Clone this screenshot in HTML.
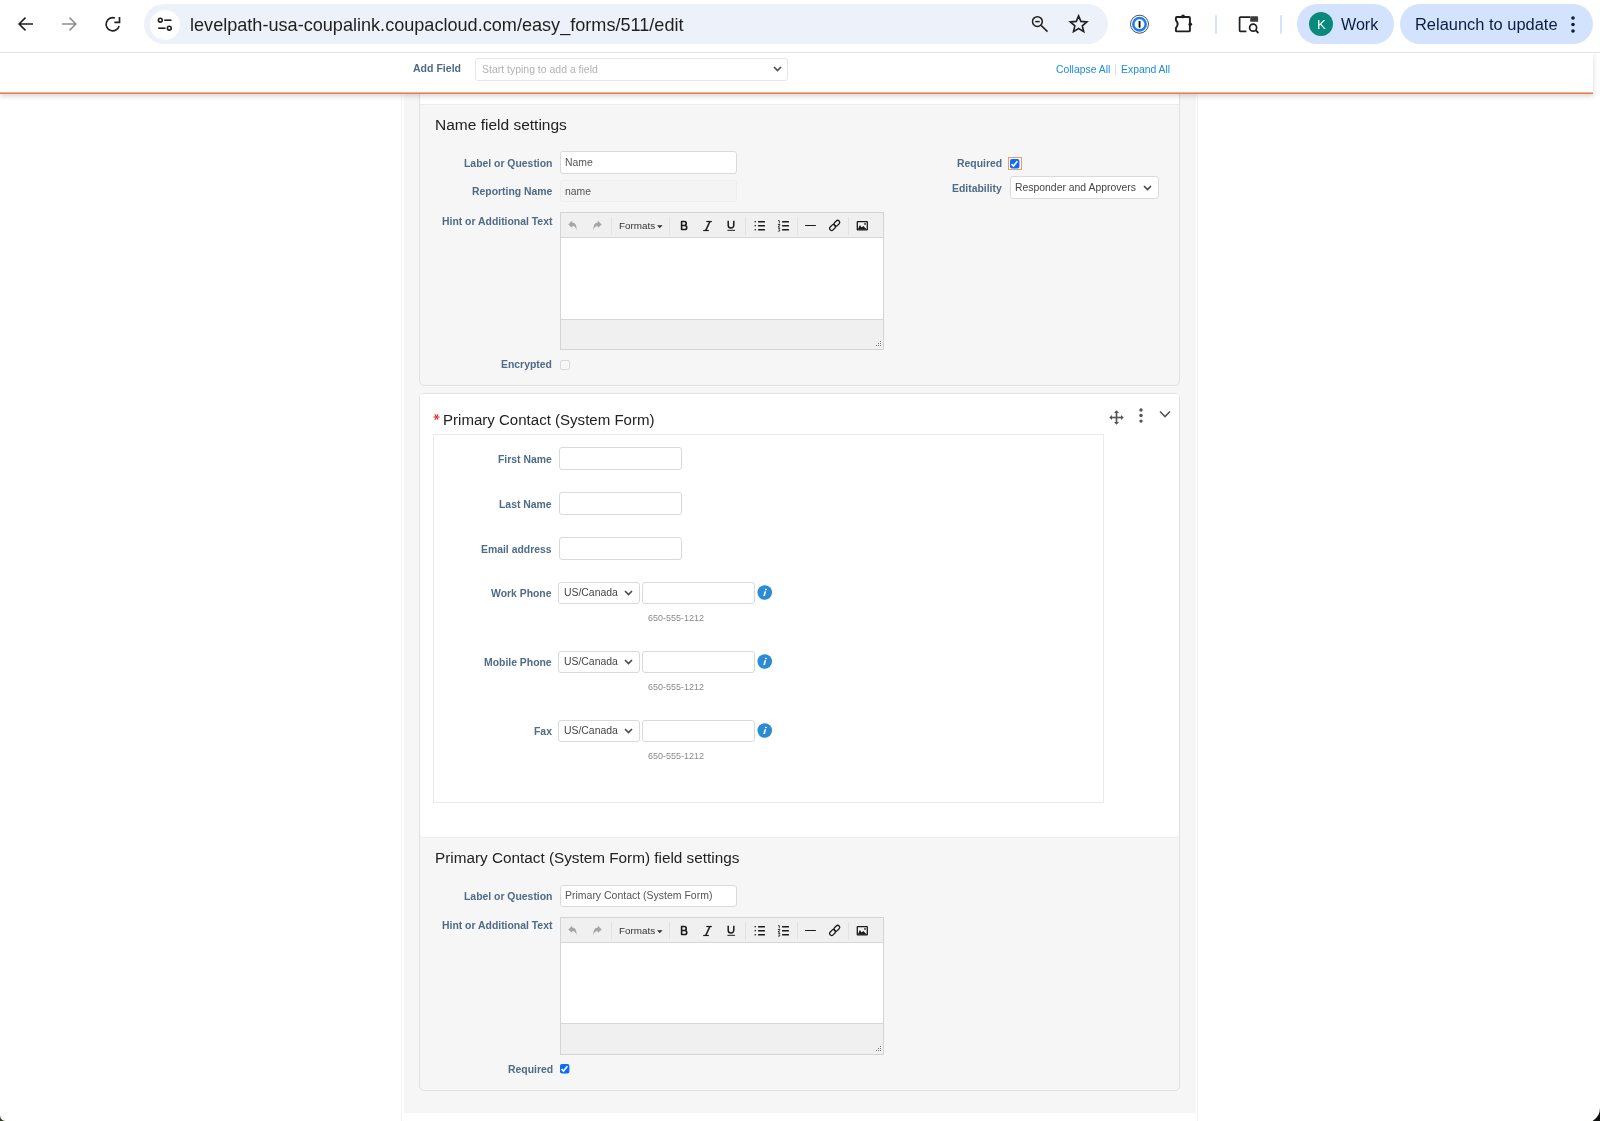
<!DOCTYPE html>
<html><head><meta charset="utf-8">
<style>
*{box-sizing:border-box;margin:0;padding:0}
html,body{width:1600px;height:1121px;overflow:hidden;background:#fff;font-family:"Liberation Sans",sans-serif;position:relative}
.a{position:absolute}
.t{line-height:1;white-space:nowrap;will-change:transform}
</style></head><body>

<div class="a" style="left:401px;top:53px;width:1px;height:1068px;background:#f2f2f2"></div>
<div class="a" style="left:1197px;top:53px;width:1px;height:1068px;background:#f2f2f2"></div>
<div class="a" style="left:404px;top:53px;width:792px;height:1060px;background:#f6f6f6"></div>
<div class="a" style="left:419px;top:40px;width:761px;height:346px;background:#f6f6f6;border:1px solid #e2e2e2;border-radius:5px"></div>
<div class="a" style="left:420px;top:41px;width:759px;height:64px;background:#fff;border-bottom:1px solid #ececec"></div>
<div class="a t" style="left:435.00px;top:116.88px;font-size:15.5px;color:#222;font-weight:normal;">Name field settings</div>
<div class="a t" style="right:1047.50px;top:159.08px;font-size:10.42px;color:#4e6b88;font-weight:bold;">Label or Question</div>
<div class="a" style="left:560px;top:151px;width:177px;height:23px;background:#fff;border:1px solid #dadada;border-radius:3px;"></div>
<div class="a t" style="left:564.80px;top:158.48px;font-size:10.42px;color:#555;font-weight:normal;">Name</div>
<div class="a t" style="right:1047.50px;top:187.48px;font-size:10.42px;color:#4e6b88;font-weight:bold;">Reporting Name</div>
<div class="a" style="left:560px;top:180px;width:177px;height:22px;background:#f4f4f4;border:1px solid #ededed;border-radius:3px"></div>
<div class="a t" style="left:564.80px;top:186.78px;font-size:10.42px;color:#555;font-weight:normal;">name</div>
<div class="a t" style="right:1047.50px;top:216.78px;font-size:10.42px;color:#4e6b88;font-weight:bold;">Hint or Additional Text</div>
<div class="a" style="left:560px;top:212px;width:324px;height:138px;border:1px solid #d4d4d4;background:#f0f0f0"></div>
<div class="a" style="left:561px;top:237px;width:322px;height:83px;background:#fff;border-top:1px solid #d6d6d6;border-bottom:1px solid #d6d6d6"></div>
<div class="a" style="left:611px;top:217px;width:1px;height:18px;background:#e2e2e2"></div>
<div class="a" style="left:669px;top:217px;width:1px;height:18px;background:#e2e2e2"></div>
<div class="a" style="left:745px;top:217px;width:1px;height:18px;background:#e2e2e2"></div>
<div class="a" style="left:797px;top:217px;width:1px;height:18px;background:#e2e2e2"></div>
<div class="a" style="left:848px;top:217px;width:1px;height:18px;background:#e2e2e2"></div>
<svg class="a" style="left:566px;top:219px" width="12" height="13" viewBox="0 0 12 13"><path d="M2.3 5.4 L6.2 1.6 V3.8 C9.3 3.8 10.8 5.6 10.5 11.5 C9.9 8.4 8.6 7.1 6.2 7.1 V9.0 Z" fill="#a6a6a6"/></svg>
<svg class="a" style="left:592.4px;top:219px" width="12" height="13" viewBox="0 0 12 13"><path d="M9.7 5.4 L5.8 1.6 V3.8 C2.7 3.8 1.2 5.6 1.5 11.5 C2.1 8.4 3.4 7.1 5.8 7.1 V9.0 Z" fill="#a6a6a6"/></svg>
<div class="a t" style="left:618.60px;top:221.42px;font-size:9.9px;color:#333;font-weight:normal;">Formats</div>
<svg class="a" style="left:657px;top:224.5px" width="6" height="4" viewBox="0 0 6 4"><path d="M0 0.3 H5.6 L2.8 3.3 Z" fill="#333"/></svg>
<svg class="a" style="left:680px;top:220px" width="9" height="12" viewBox="0 0 9 12"><path d="M1.6 1.55 H4.3 A1.95 1.95 0 0 1 4.3 5.45 H1.6 Z M1.6 5.45 H4.7 A2.05 2.05 0 0 1 4.7 9.55 H1.6 Z" fill="none" stroke="#1a1a1a" stroke-width="1.6" stroke-linejoin="round"/></svg>
<svg class="a" style="left:702px;top:220px" width="11" height="12" viewBox="0 0 11 12"><g stroke="#1a1a1a"><path d="M4.3 1.5 H9.8" stroke-width="1.2"/><path d="M1.2 10.5 H6.8" stroke-width="1.2"/><path d="M7.9 1.5 L3.7 10.5" stroke-width="1.6"/></g></svg>
<svg class="a" style="left:727px;top:220px" width="9" height="12" viewBox="0 0 9 12"><path d="M1.2 0.8 V5.3 A2.8 2.8 0 0 0 6.8 5.3 V0.8" fill="none" stroke="#1a1a1a" stroke-width="1.5"/><rect x="0.4" y="9.8" width="7.6" height="1.1" fill="#333"/></svg>
<svg class="a" style="left:754px;top:220px" width="12" height="11" viewBox="0 0 12 11"><g fill="#1a1a1a"><rect x="0.6" y="1" width="1.3" height="1.3"/><rect x="0.6" y="5" width="1.3" height="1.3"/><rect x="0.6" y="9.1" width="1.3" height="1.3"/><rect x="4" y="0.9" width="7" height="1.5" rx=".5"/><rect x="4" y="4.9" width="7" height="1.5" rx=".5"/><rect x="4" y="9" width="7" height="1.5" rx=".5"/></g></svg>
<svg class="a" style="left:777px;top:220px" width="12" height="12" viewBox="0 0 12 12"><g fill="#1a1a1a"><rect x="5" y="0.9" width="7" height="1.5" rx=".5"/><rect x="5" y="4.9" width="7" height="1.5" rx=".5"/><rect x="5" y="9" width="7" height="1.5" rx=".5"/></g><g fill="none" stroke="#1a1a1a" stroke-width="0.8"><path d="M1 0.6 H2.3 V3.4"/><path d="M0.9 4.5 H3 L1 7 H3"/><path d="M1 8.3 H3 L2 9.5 Q3.2 9.8 2.6 11.1 H0.9"/></g></svg>
<div class="a" style="left:805px;top:224.8px;width:11px;height:1.3999999999999773px;background:#1a1a1a;border-radius:1px"></div>
<svg class="a" style="left:828px;top:218px" width="14" height="14" viewBox="0 0 14 14"><g fill="none" stroke="#1a1a1a" stroke-width="1.25"><rect x="-3.3" y="-2" width="6.6" height="4" rx="2" transform="translate(8.8 5.3) rotate(-45)"/><rect x="-3.3" y="-2" width="6.6" height="4" rx="2" transform="translate(4.6 9.5) rotate(-45)"/></g></svg>
<svg class="a" style="left:856px;top:220px" width="13" height="11" viewBox="0 0 13 11"><rect x="1.3" y="1.7" width="10" height="8.2" fill="none" stroke="#1a1a1a" stroke-width="1.3" rx=".4"/><path d="M1.8 9.6 L3.9 5.0 L5.6 7.5 L7.2 5.9 L10.9 9.6 Z" fill="#1a1a1a"/><circle cx="9" cy="3.9" r="0.85" fill="#1a1a1a"/></svg>
<svg class="a" style="left:876px;top:341px" width="5" height="5" viewBox="0 0 5 5"><g fill="#777"><rect x="4" y="0" width="1" height="1"/><rect x="2" y="2" width="1" height="1"/><rect x="4" y="2" width="1" height="1"/><rect x="0" y="4" width="1" height="1"/><rect x="2" y="4" width="1" height="1"/><rect x="4" y="4" width="1" height="1"/></g></svg>
<div class="a t" style="right:1047.80px;top:360.28px;font-size:10.42px;color:#4e6b88;font-weight:bold;">Encrypted</div>
<div class="a" style="left:560px;top:360px;width:10px;height:10px;border:1px solid #d8d8d8;border-radius:2px;background:#f7f7f7"></div>
<div class="a t" style="right:597.90px;top:158.88px;font-size:10.42px;color:#4e6b88;font-weight:bold;">Required</div>
<div class="a" style="left:1008px;top:157px;width:14px;height:13px;border:1px solid #f29a66"></div>
<svg class="a" style="left:1010px;top:159px" width="10" height="10" viewBox="0 0 10 10"><rect x="0" y="0" width="9.4" height="9.4" rx="2" fill="#0a6cfb"/><path d="M1.5 5.1 L3.5 7.1 L7.4 2.2" fill="none" stroke="#fff" stroke-width="1.6"/></svg>
<div class="a t" style="right:597.90px;top:183.58px;font-size:10.42px;color:#4e6b88;font-weight:bold;">Editability</div>
<div class="a" style="left:1009.5px;top:176px;width:149.0px;height:23px;background:#fff;border:1px solid #dadada;border-radius:3px;"></div>
<div class="a t" style="left:1014.60px;top:183.18px;font-size:10.42px;color:#444;font-weight:normal;">Responder and Approvers</div>
<svg class="a" style="left:1143px;top:185px" width="9" height="6" viewBox="0 0 9 6"><path d="M1 1 L4.5 4.5 L8 1" fill="none" stroke="#444" stroke-width="1.6"/></svg>
<div class="a" style="left:419px;top:393px;width:761px;height:698px;background:#f6f6f6;border:1px solid #e2e2e2;border-radius:5px"></div>
<div class="a" style="left:420px;top:394px;width:759px;height:444px;background:#fff;border-radius:3px 3px 4px 4px;border-bottom:1px solid #efefef"></div>
<svg class="a" style="left:432px;top:413px" width="9" height="9" viewBox="0 0 9 9"><g stroke="#e32222" stroke-width="1.1" stroke-linecap="round"><path d="M1.8 4 H7.2"/><path d="M3.15 1.65 L5.85 6.35"/><path d="M5.85 1.65 L3.15 6.35"/></g></svg>
<div class="a t" style="left:442.90px;top:411.96px;font-size:15.05px;color:#222;font-weight:normal;">Primary Contact (System Form)</div>
<svg class="a" style="left:1109px;top:410px" width="15" height="15" viewBox="0 0 15 15"><g fill="#555"><path d="M7.5 0.3 L10 3 H5 Z"/><path d="M7.5 14.7 L10 12 H5 Z"/><path d="M0.3 7.5 L3 5 V10 Z"/><path d="M14.7 7.5 L12 5 V10 Z"/><rect x="6.7" y="2.5" width="1.6" height="10"/><rect x="2.5" y="6.7" width="10" height="1.6"/></g></svg>
<svg class="a" style="left:1138px;top:407px" width="6" height="17" viewBox="0 0 6 17"><g fill="#555"><circle cx="3" cy="3" r="1.7"/><circle cx="3" cy="8.5" r="1.7"/><circle cx="3" cy="14.1" r="1.7"/></g></svg>
<svg class="a" style="left:1159px;top:410px" width="12" height="9" viewBox="0 0 12 9"><path d="M1 1.5 L6 6.5 L11 1.5" fill="none" stroke="#555" stroke-width="1.6"/></svg>
<div class="a" style="left:433px;top:434px;width:671px;height:369px;background:#fff;border:1px solid #ebebeb"></div>
<div class="a t" style="right:1048.50px;top:454.78px;font-size:10.42px;color:#4e6b88;font-weight:bold;">First Name</div>
<div class="a" style="left:558.5px;top:447px;width:123.5px;height:22.5px;background:#fff;border:1px solid #dadada;border-radius:3px;"></div>
<div class="a t" style="right:1048.50px;top:499.78px;font-size:10.42px;color:#4e6b88;font-weight:bold;">Last Name</div>
<div class="a" style="left:558.5px;top:492px;width:123.5px;height:22.5px;background:#fff;border:1px solid #dadada;border-radius:3px;"></div>
<div class="a t" style="right:1048.50px;top:544.78px;font-size:10.42px;color:#4e6b88;font-weight:bold;">Email address</div>
<div class="a" style="left:558.5px;top:537px;width:123.5px;height:22.5px;background:#fff;border:1px solid #dadada;border-radius:3px;"></div>
<div class="a t" style="right:1048.50px;top:589.48px;font-size:10.42px;color:#4e6b88;font-weight:bold;">Work Phone</div>
<div class="a" style="left:558px;top:582px;width:82px;height:22px;background:#fff;border:1px solid #dadada;border-radius:3px;"></div>
<div class="a t" style="left:563.70px;top:588.48px;font-size:10.42px;color:#444;font-weight:normal;">US/Canada</div>
<svg class="a" style="left:624.3px;top:590.3px" width="9" height="6" viewBox="0 0 9 6"><path d="M1 1 L4.5 4.5 L8 1" fill="none" stroke="#4a4a4a" stroke-width="1.6"/></svg>
<div class="a" style="left:642px;top:582px;width:113px;height:22px;background:#fff;border:1px solid #dadada;border-radius:3px;"></div>
<svg class="a" style="left:757px;top:585px" width="16" height="16" viewBox="0 0 16 16"><circle cx="7.75" cy="7.5" r="7.3" fill="#2b8bd3"/><ellipse cx="8.9" cy="4.5" rx="1.05" ry="0.8" fill="#fff"/><path d="M7.6 6.2 L9.2 6.2 L7.9 11.1 L6.2 11.1 Z" fill="#fff"/></svg>
<div class="a t" style="left:648.00px;top:613.98px;font-size:9.0px;color:#8a8a8a;font-weight:normal;">650-555-1212</div>
<div class="a t" style="right:1048.50px;top:658.48px;font-size:10.42px;color:#4e6b88;font-weight:bold;">Mobile Phone</div>
<div class="a" style="left:558px;top:651px;width:82px;height:22px;background:#fff;border:1px solid #dadada;border-radius:3px;"></div>
<div class="a t" style="left:563.70px;top:657.48px;font-size:10.42px;color:#444;font-weight:normal;">US/Canada</div>
<svg class="a" style="left:624.3px;top:659.3px" width="9" height="6" viewBox="0 0 9 6"><path d="M1 1 L4.5 4.5 L8 1" fill="none" stroke="#4a4a4a" stroke-width="1.6"/></svg>
<div class="a" style="left:642px;top:651px;width:113px;height:22px;background:#fff;border:1px solid #dadada;border-radius:3px;"></div>
<svg class="a" style="left:757px;top:654px" width="16" height="16" viewBox="0 0 16 16"><circle cx="7.75" cy="7.5" r="7.3" fill="#2b8bd3"/><ellipse cx="8.9" cy="4.5" rx="1.05" ry="0.8" fill="#fff"/><path d="M7.6 6.2 L9.2 6.2 L7.9 11.1 L6.2 11.1 Z" fill="#fff"/></svg>
<div class="a t" style="left:648.00px;top:682.98px;font-size:9.0px;color:#8a8a8a;font-weight:normal;">650-555-1212</div>
<div class="a t" style="right:1048.50px;top:727.48px;font-size:10.42px;color:#4e6b88;font-weight:bold;">Fax</div>
<div class="a" style="left:558px;top:720px;width:82px;height:22px;background:#fff;border:1px solid #dadada;border-radius:3px;"></div>
<div class="a t" style="left:563.70px;top:726.48px;font-size:10.42px;color:#444;font-weight:normal;">US/Canada</div>
<svg class="a" style="left:624.3px;top:728.3px" width="9" height="6" viewBox="0 0 9 6"><path d="M1 1 L4.5 4.5 L8 1" fill="none" stroke="#4a4a4a" stroke-width="1.6"/></svg>
<div class="a" style="left:642px;top:720px;width:113px;height:22px;background:#fff;border:1px solid #dadada;border-radius:3px;"></div>
<svg class="a" style="left:757px;top:723px" width="16" height="16" viewBox="0 0 16 16"><circle cx="7.75" cy="7.5" r="7.3" fill="#2b8bd3"/><ellipse cx="8.9" cy="4.5" rx="1.05" ry="0.8" fill="#fff"/><path d="M7.6 6.2 L9.2 6.2 L7.9 11.1 L6.2 11.1 Z" fill="#fff"/></svg>
<div class="a t" style="left:648.00px;top:751.98px;font-size:9.0px;color:#8a8a8a;font-weight:normal;">650-555-1212</div>
<div class="a t" style="left:435.20px;top:850.45px;font-size:15.3px;color:#222;font-weight:normal;">Primary Contact (System Form) field settings</div>
<div class="a t" style="right:1047.50px;top:892.08px;font-size:10.42px;color:#4e6b88;font-weight:bold;">Label or Question</div>
<div class="a" style="left:560px;top:884.5px;width:177px;height:22.0px;background:#fff;border:1px solid #dadada;border-radius:3px;"></div>
<div class="a t" style="left:564.80px;top:891.12px;font-size:10.49px;color:#555;font-weight:normal;">Primary Contact (System Form)</div>
<div class="a t" style="right:1047.50px;top:921.18px;font-size:10.42px;color:#4e6b88;font-weight:bold;">Hint or Additional Text</div>
<div class="a" style="left:560px;top:917px;width:324px;height:137.5px;border:1px solid #d4d4d4;background:#f0f0f0"></div>
<div class="a" style="left:561px;top:942px;width:322px;height:82px;background:#fff;border-top:1px solid #d6d6d6;border-bottom:1px solid #d6d6d6"></div>
<div class="a" style="left:611px;top:922px;width:1px;height:18px;background:#e2e2e2"></div>
<div class="a" style="left:669px;top:922px;width:1px;height:18px;background:#e2e2e2"></div>
<div class="a" style="left:745px;top:922px;width:1px;height:18px;background:#e2e2e2"></div>
<div class="a" style="left:797px;top:922px;width:1px;height:18px;background:#e2e2e2"></div>
<div class="a" style="left:848px;top:922px;width:1px;height:18px;background:#e2e2e2"></div>
<svg class="a" style="left:566px;top:924px" width="12" height="13" viewBox="0 0 12 13"><path d="M2.3 5.4 L6.2 1.6 V3.8 C9.3 3.8 10.8 5.6 10.5 11.5 C9.9 8.4 8.6 7.1 6.2 7.1 V9.0 Z" fill="#a6a6a6"/></svg>
<svg class="a" style="left:592.4px;top:924px" width="12" height="13" viewBox="0 0 12 13"><path d="M9.7 5.4 L5.8 1.6 V3.8 C2.7 3.8 1.2 5.6 1.5 11.5 C2.1 8.4 3.4 7.1 5.8 7.1 V9.0 Z" fill="#a6a6a6"/></svg>
<div class="a t" style="left:618.60px;top:926.42px;font-size:9.9px;color:#333;font-weight:normal;">Formats</div>
<svg class="a" style="left:657px;top:929.5px" width="6" height="4" viewBox="0 0 6 4"><path d="M0 0.3 H5.6 L2.8 3.3 Z" fill="#333"/></svg>
<svg class="a" style="left:680px;top:925px" width="9" height="12" viewBox="0 0 9 12"><path d="M1.6 1.55 H4.3 A1.95 1.95 0 0 1 4.3 5.45 H1.6 Z M1.6 5.45 H4.7 A2.05 2.05 0 0 1 4.7 9.55 H1.6 Z" fill="none" stroke="#1a1a1a" stroke-width="1.6" stroke-linejoin="round"/></svg>
<svg class="a" style="left:702px;top:925px" width="11" height="12" viewBox="0 0 11 12"><g stroke="#1a1a1a"><path d="M4.3 1.5 H9.8" stroke-width="1.2"/><path d="M1.2 10.5 H6.8" stroke-width="1.2"/><path d="M7.9 1.5 L3.7 10.5" stroke-width="1.6"/></g></svg>
<svg class="a" style="left:727px;top:925px" width="9" height="12" viewBox="0 0 9 12"><path d="M1.2 0.8 V5.3 A2.8 2.8 0 0 0 6.8 5.3 V0.8" fill="none" stroke="#1a1a1a" stroke-width="1.5"/><rect x="0.4" y="9.8" width="7.6" height="1.1" fill="#333"/></svg>
<svg class="a" style="left:754px;top:925px" width="12" height="11" viewBox="0 0 12 11"><g fill="#1a1a1a"><rect x="0.6" y="1" width="1.3" height="1.3"/><rect x="0.6" y="5" width="1.3" height="1.3"/><rect x="0.6" y="9.1" width="1.3" height="1.3"/><rect x="4" y="0.9" width="7" height="1.5" rx=".5"/><rect x="4" y="4.9" width="7" height="1.5" rx=".5"/><rect x="4" y="9" width="7" height="1.5" rx=".5"/></g></svg>
<svg class="a" style="left:777px;top:925px" width="12" height="12" viewBox="0 0 12 12"><g fill="#1a1a1a"><rect x="5" y="0.9" width="7" height="1.5" rx=".5"/><rect x="5" y="4.9" width="7" height="1.5" rx=".5"/><rect x="5" y="9" width="7" height="1.5" rx=".5"/></g><g fill="none" stroke="#1a1a1a" stroke-width="0.8"><path d="M1 0.6 H2.3 V3.4"/><path d="M0.9 4.5 H3 L1 7 H3"/><path d="M1 8.3 H3 L2 9.5 Q3.2 9.8 2.6 11.1 H0.9"/></g></svg>
<div class="a" style="left:805px;top:929.8px;width:11px;height:1.400000000000091px;background:#1a1a1a;border-radius:1px"></div>
<svg class="a" style="left:828px;top:923px" width="14" height="14" viewBox="0 0 14 14"><g fill="none" stroke="#1a1a1a" stroke-width="1.25"><rect x="-3.3" y="-2" width="6.6" height="4" rx="2" transform="translate(8.8 5.3) rotate(-45)"/><rect x="-3.3" y="-2" width="6.6" height="4" rx="2" transform="translate(4.6 9.5) rotate(-45)"/></g></svg>
<svg class="a" style="left:856px;top:925px" width="13" height="11" viewBox="0 0 13 11"><rect x="1.3" y="1.7" width="10" height="8.2" fill="none" stroke="#1a1a1a" stroke-width="1.3" rx=".4"/><path d="M1.8 9.6 L3.9 5.0 L5.6 7.5 L7.2 5.9 L10.9 9.6 Z" fill="#1a1a1a"/><circle cx="9" cy="3.9" r="0.85" fill="#1a1a1a"/></svg>
<svg class="a" style="left:876px;top:1045.5px" width="5" height="5" viewBox="0 0 5 5"><g fill="#777"><rect x="4" y="0" width="1" height="1"/><rect x="2" y="2" width="1" height="1"/><rect x="4" y="2" width="1" height="1"/><rect x="0" y="4" width="1" height="1"/><rect x="2" y="4" width="1" height="1"/><rect x="4" y="4" width="1" height="1"/></g></svg>
<div class="a t" style="right:1047.20px;top:1064.88px;font-size:10.42px;color:#4e6b88;font-weight:bold;">Required</div>
<svg class="a" style="left:560px;top:1064px" width="10" height="10" viewBox="0 0 10 10"><rect x="0" y="0" width="9.4" height="9.4" rx="2" fill="#0a6cfb"/><path d="M1.5 5.1 L3.5 7.1 L7.4 2.2" fill="none" stroke="#fff" stroke-width="1.6"/></svg>
<div class="a" style="left:0px;top:53px;width:1593px;height:41px;background:#fff;border-bottom:1px solid #ec7b4b;box-shadow:0 2px 5px rgba(0,0,0,.17)"></div>
<div class="a" style="left:0px;top:92px;width:1593px;height:1px;background:#f5b393"></div>
<div class="a t" style="right:1138.60px;top:63.37px;font-size:10.55px;color:#4e6b88;font-weight:bold;">Add Field</div>
<div class="a" style="left:475px;top:58px;width:313px;height:23px;background:#fff;border:1px solid #dadada;border-radius:3px;border-color:#e6e6e6"></div>
<div class="a t" style="left:481.60px;top:65.14px;font-size:10.47px;color:#b2b2b2;font-weight:normal;">Start typing to add a field</div>
<svg class="a" style="left:773px;top:65.6px" width="9" height="6" viewBox="0 0 9 6"><path d="M1 1 L4.5 4.5 L8 1" fill="none" stroke="#505050" stroke-width="1.7"/></svg>
<div class="a t" style="left:1055.80px;top:64.50px;font-size:10.4px;color:#1a8edc;font-weight:normal;">Collapse All</div>
<div class="a" style="left:1115px;top:64px;width:1px;height:11px;background:#e2e2e2"></div>
<div class="a t" style="left:1121.00px;top:64.50px;font-size:10.4px;color:#1a8edc;font-weight:normal;">Expand All</div>
<div class="a" style="left:0px;top:0px;width:1600px;height:52px;background:#fff"></div>
<div class="a" style="left:0px;top:52px;width:1600px;height:1px;background:#e3e3e3"></div>
<div class="a" style="left:144px;top:4px;width:964px;height:40px;background:#edf2fa;border-radius:20px"></div>
<div class="a" style="left:150px;top:10px;width:29.5px;height:29.5px;border-radius:15px;background:#fff"></div>
<svg class="a" style="left:157px;top:17.1px" width="16" height="16" viewBox="0 0 16 16"><g fill="none" stroke="#1f1f1f" stroke-width="1.6"><circle cx="3.3" cy="3.2" r="1.9"/><path d="M7.2 3.2 H14.5"/><circle cx="12.3" cy="11.2" r="1.9"/><path d="M1.2 11.2 H8.5"/></g></svg>
<div class="a t" style="left:189.50px;top:15.58px;font-size:18.1px;color:#1f1f1f;font-weight:normal;">levelpath-usa-coupalink.coupacloud.com/easy_forms/511/edit</div>
<svg class="a" style="left:17px;top:16px" width="17" height="16" viewBox="0 0 17 16"><path d="M16 8 H2.5 M8.5 1.6 L2.1 8 L8.5 14.4" fill="none" stroke="#1f1f1f" stroke-width="1.55"/></svg>
<svg class="a" style="left:61px;top:16px" width="17" height="16" viewBox="0 0 17 16"><path d="M1 8 H14.5 M8.5 1.6 L14.9 8 L8.5 14.4" fill="none" stroke="#8e8e8e" stroke-width="1.5"/></svg>
<svg class="a" style="left:104px;top:16px" width="18" height="17" viewBox="0 0 18 17"><path d="M15.12 9.96 A6.6 6.6 0 1 1 11.0 2.05" fill="none" stroke="#1f1f1f" stroke-width="1.6"/><path d="M10.4 6.4 H15.5 V0.9" fill="none" stroke="#1f1f1f" stroke-width="1.7"/></svg>
<svg class="a" style="left:1030px;top:14px" width="20" height="20" viewBox="0 0 20 20"><g fill="none" stroke="#1f1f1f" stroke-width="1.5"><circle cx="7.4" cy="7.6" r="4.9"/><path d="M5.2 7.6 H9.7"/><path d="M11.1 11.4 L17.5 17.6"/></g></svg>
<svg class="a" style="left:1068px;top:14px" width="22" height="20" viewBox="0 0 22 20"><path d="M10.6 1.9 L12.9 7.4 L18.9 7.9 L14.3 11.8 L15.7 17.6 L10.6 14.5 L5.5 17.6 L6.9 11.8 L2.3 7.9 L8.3 7.4 Z" fill="none" stroke="#1f1f1f" stroke-width="1.6" stroke-linejoin="miter"/></svg>
<svg class="a" style="left:1129px;top:14px" width="21" height="21" viewBox="0 0 21 21"><circle cx="10.5" cy="10.2" r="9" fill="#fff" stroke="#3a3a3a" stroke-width="0.9"/><circle cx="10.5" cy="10.2" r="6.2" fill="none" stroke="#1a7ff5" stroke-width="2.6"/><rect x="9.6" y="6.9" width="1.9" height="6.8" rx="0.6" fill="#111"/></svg>
<svg class="a" style="left:1173px;top:12px" width="22" height="22" viewBox="0 0 22 22"><path d="M2.9 6 Q2.9 5 3.9 5 H15.9 Q16.9 5 16.9 6 V18.4 Q16.9 19.4 15.9 19.4 H3.9 Q2.9 19.4 2.9 18.4 V16.2 Q6.4 12.2 2.9 8.2 Z" fill="none" stroke="#1f1f1f" stroke-width="1.9" stroke-linejoin="round"/><circle cx="10" cy="4.4" r="1.9" fill="#1f1f1f"/><circle cx="17.3" cy="12.2" r="1.8" fill="#1f1f1f"/></svg>
<div class="a" style="left:1215px;top:15px;width:2px;height:19px;background:#d3e3fd;border-radius:1px"></div>
<svg class="a" style="left:1237px;top:14px" width="24" height="21" viewBox="0 0 24 21"><path d="M13 3.1 H3.4 Q2.6 3.1 2.6 3.9 V16.5 Q2.6 17.3 3.4 17.3 H9.4" fill="none" stroke="#1f1f1f" stroke-width="1.7"/><path d="M13.2 2.3 H20.3 Q21.1 2.3 21.1 3.1 V7.8 H13.2 Z" fill="#3c3c3c"/><circle cx="16.1" cy="13.7" r="3.5" fill="none" stroke="#1f1f1f" stroke-width="1.7"/><path d="M18.6 16.2 L21.4 19" stroke="#1f1f1f" stroke-width="1.8"/></svg>
<div class="a" style="left:1280px;top:15px;width:2px;height:19px;background:#d3e3fd;border-radius:1px"></div>
<div class="a" style="left:1297px;top:4px;width:97px;height:40px;background:#d3e3fd;border-radius:20px"></div>
<div class="a" style="left:1400px;top:4px;width:193px;height:40px;background:#d3e3fd;border-radius:20px"></div>
<div class="a" style="left:1309px;top:12px;width:24px;height:24px;border-radius:12px;background:#08897a"></div>
<div class="a t" style="left:1317.00px;top:17.73px;font-size:13.2px;color:#fff;font-weight:normal;">K</div>
<div class="a t" style="left:1341.00px;top:16.47px;font-size:16.1px;color:#0b1d40;font-weight:normal;">Work</div>
<div class="a t" style="left:1415.00px;top:16.18px;font-size:16.44px;color:#0b1d40;font-weight:normal;">Relaunch to update</div>
<svg class="a" style="left:1570px;top:15px" width="6" height="19" viewBox="0 0 6 19"><g fill="#0b1d40"><circle cx="3" cy="3" r="1.8"/><circle cx="3" cy="9.5" r="1.8"/><circle cx="3" cy="16" r="1.8"/></g></svg>
<svg class="a" style="left:0;top:0" width="1600" height="1121" viewBox="0 0 1600 1121"><path d="M1600 1107.8 A15.5 15.5 0 0 1 1592.6 1121 L1600 1121 Z" fill="#0d140d"/><path d="M0 1115.3 A6.1 6.1 0 0 0 5.4 1121 L0 1121 Z" fill="#2d4015"/></svg>
</body></html>
